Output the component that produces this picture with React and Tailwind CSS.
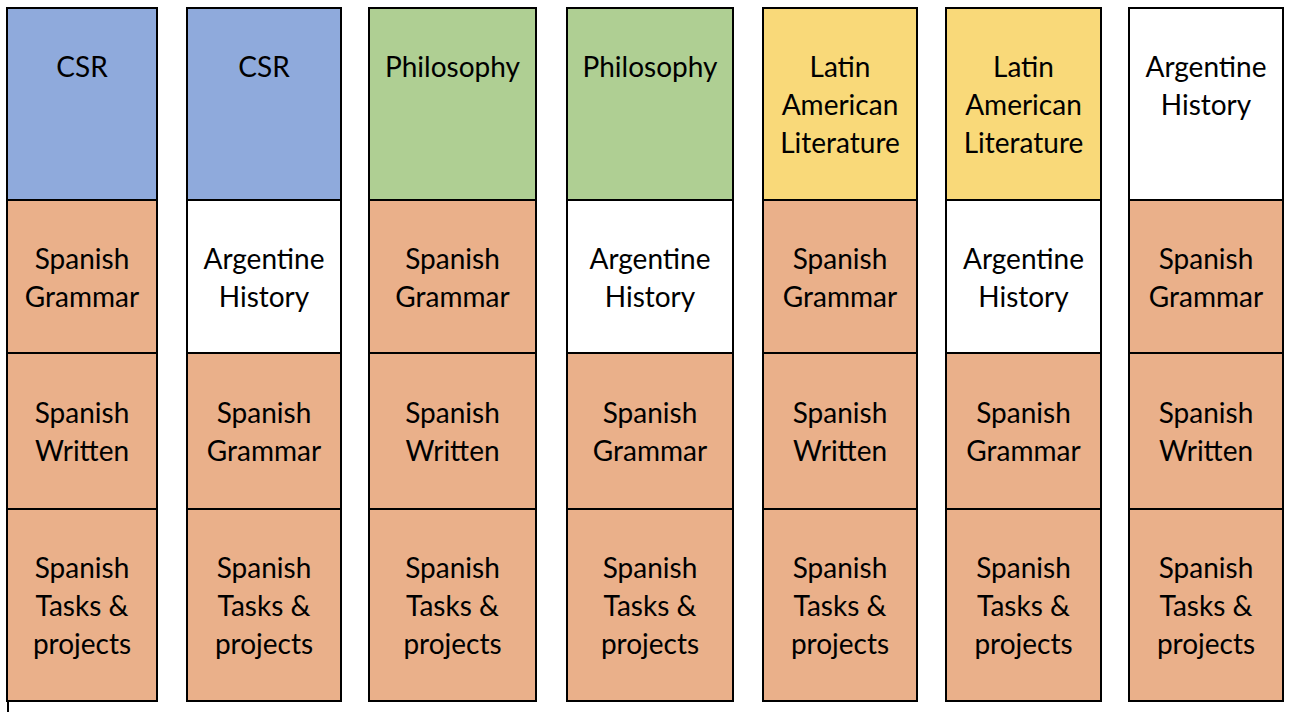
const BLUE = 'bg-[#8faadc]';
const GREEN = 'bg-[#afcf93]';
const YELLOW = 'bg-[#f9d979]';
const ORANGE = 'bg-[#eab08a]';
const WHITE = 'bg-white';

const columns = [
  { w: 'w-[152px]', ml: 'ml-[6px]', head: ['CSR'], headBg: BLUE, second: ['Spanish', 'Grammar'], secondBg: ORANGE, third: ['Spanish', 'Written'] },
  { w: 'w-[156px]', ml: 'ml-[28px]', head: ['CSR'], headBg: BLUE, second: ['Argentine', 'History'], secondBg: WHITE, third: ['Spanish', 'Grammar'] },
  { w: 'w-[169px]', ml: 'ml-[26px]', head: ['Philosophy'], headBg: GREEN, second: ['Spanish', 'Grammar'], secondBg: ORANGE, third: ['Spanish', 'Written'] },
  { w: 'w-[168px]', ml: 'ml-[29px]', head: ['Philosophy'], headBg: GREEN, second: ['Argentine', 'History'], secondBg: WHITE, third: ['Spanish', 'Grammar'] },
  { w: 'w-[156px]', ml: 'ml-[28px]', head: ['Latin', 'American', 'Literature'], headBg: YELLOW, second: ['Spanish', 'Grammar'], secondBg: ORANGE, third: ['Spanish', 'Written'] },
  { w: 'w-[157px]', ml: 'ml-[27px]', head: ['Latin', 'American', 'Literature'], headBg: YELLOW, second: ['Argentine', 'History'], secondBg: WHITE, third: ['Spanish', 'Grammar'] },
  { w: 'w-[156px]', ml: 'ml-[26px]', head: ['Argentine', 'History'], headBg: WHITE, second: ['Spanish', 'Grammar'], secondBg: ORANGE, third: ['Spanish', 'Written'] },
];

const Lines = ({ lines }) => (
  <div className="text-center">
    {lines.map((l) => (
      <div key={l}>{l}</div>
    ))}
  </div>
);

export default function App() {
  return (
    <div
      className="relative w-[1294px] h-[712px] bg-white text-black text-[28px] leading-[38px] overflow-hidden"
      style={{ fontFamily: 'Lato, "Open Sans", sans-serif' }}
    >
      <div className="flex pt-[7px]">
        {columns.map((c, i) => (
          <div key={i} className={`${c.w} ${c.ml} flex flex-col border-2 border-black`}>
            {/* header */}
            <div className={`h-[192px] border-b-2 border-black pt-[38px] ${c.headBg}`}>
              <Lines lines={c.head} />
            </div>
            <div className={`h-[153px] border-b-2 border-black flex items-center justify-center ${c.secondBg}`}>
              <Lines lines={c.second} />
            </div>
            <div className={`h-[156px] border-b-2 border-black flex items-center justify-center ${ORANGE}`}>
              <Lines lines={c.third} />
            </div>
            <div className={`h-[190px] flex items-center justify-center ${ORANGE}`}>
              <Lines lines={['Spanish', 'Tasks &', 'projects']} />
            </div>
          </div>
        ))}
      </div>
      {/* stray line from the page below */}
      <div className="ml-[7px] w-[2px] h-[12px] bg-black" />
    </div>
  );
}
